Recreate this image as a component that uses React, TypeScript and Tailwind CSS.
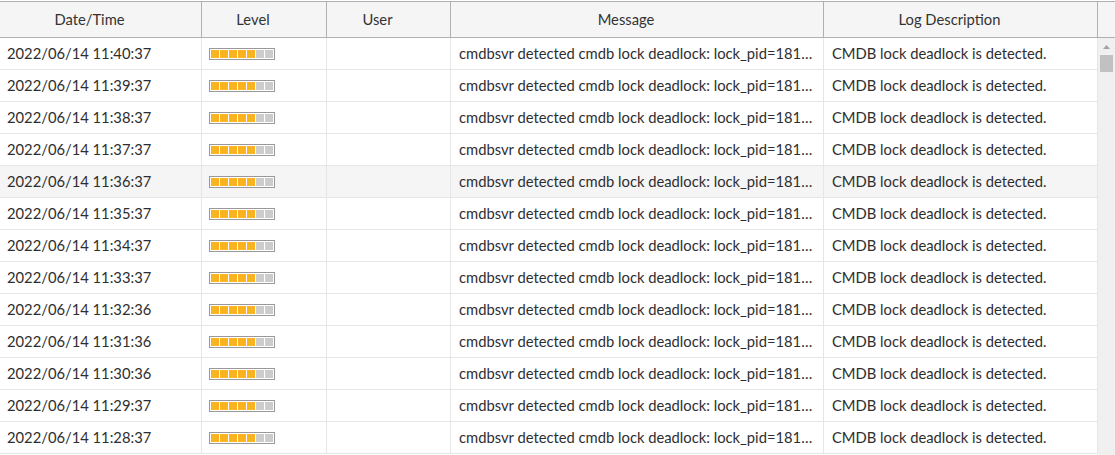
import React from 'react';

interface LogRow {
  time: string;
  level: number;
  user: string;
  message: string;
  description: string;
}

const times = [
  '2022/06/14 11:40:37',
  '2022/06/14 11:39:37',
  '2022/06/14 11:38:37',
  '2022/06/14 11:37:37',
  '2022/06/14 11:36:37',
  '2022/06/14 11:35:37',
  '2022/06/14 11:34:37',
  '2022/06/14 11:33:37',
  '2022/06/14 11:32:36',
  '2022/06/14 11:31:36',
  '2022/06/14 11:30:36',
  '2022/06/14 11:29:37',
  '2022/06/14 11:28:37',
];

const rows: LogRow[] = times.map((time) => ({
  time,
  level: 5,
  user: '',
  message: 'cmdbsvr detected cmdb lock deadlock: lock_pid=18172, lock_name=cmdb_lock, duration=60',
  description: 'CMDB lock deadlock is detected.',
}));

const cols = 'grid grid-cols-[202px_125px_124px_373px_274px]';

function LevelBar({ level }: { level: number }) {
  return (
    <div className="flex gap-px border border-[#999999] bg-white p-px w-[66px] h-[12px]">
      {Array.from({ length: 7 }).map((_, i) => (
        <div key={i} className={i < level ? 'w-[8px] h-full bg-[#fbb420]' : 'w-[8px] h-full bg-[#cccccc]'} />
      ))}
    </div>
  );
}

function HeaderCell({ label }: { label: string }) {
  return (
    <div className="flex items-center justify-center pr-[22px] border-r border-[#b0b0b0] text-[#333333]">
      {label}
    </div>
  );
}

export default function App() {
  return (
    <div
      className="w-[1115px] h-[455px] overflow-hidden bg-white pt-px text-[14.75px] text-[#2e2e2e]"
      style={{ fontFamily: 'Lato, "Open Sans", sans-serif' }}
    >
      {/* Header */}
      <div className="flex h-[37px] border-y border-[#b0b0b0] bg-[#f5f5f5]">
        <div className={`${cols} w-[1098px]`}>
          <HeaderCell label="Date/Time" />
          <HeaderCell label="Level" />
          <HeaderCell label="User" />
          <HeaderCell label="Message" />
          <HeaderCell label="Log Description" />
        </div>
        <div className="w-[17px]" />
      </div>

      {/* Body */}
      <div className="flex h-[417px]">
        <div className="w-[1098px]">
          {rows.map((row, i) => (
            <div
              key={i}
              className={`${cols} h-[32px] border-b border-[#e6e6e6] ${i === 4 ? 'bg-[#f5f5f5]' : 'bg-white'}`}
            >
              <div className="flex items-center px-[7px] border-r border-[#e6e6e6] whitespace-nowrap">{row.time}</div>
              <div className="flex items-center px-[7px] border-r border-[#e6e6e6]">
                <LevelBar level={row.level} />
              </div>
              <div className="flex items-center px-[8px] border-r border-[#e6e6e6]">{row.user}</div>
              <div className="flex items-center px-[8px] border-r border-[#e6e6e6] min-w-0">
                <span className="truncate">{row.message}</span>
              </div>
              <div className="flex items-center px-[8px] border-r border-[#e6e6e6] min-w-0">
                <span className="truncate">{row.description}</span>
              </div>
            </div>
          ))}
        </div>

        {/* Scrollbar */}
        <div className="w-[17px] bg-[#f0f0f0] flex flex-col items-center">
          <svg width="17" height="17" viewBox="0 0 17 17">
            <path d="M5 11 L8.5 7 L12 11 Z" fill="#a3a3a3" />
          </svg>
          <div className="w-[13px] h-[17px] bg-[#c1c1c1]" />
        </div>
      </div>
    </div>
  );
}
